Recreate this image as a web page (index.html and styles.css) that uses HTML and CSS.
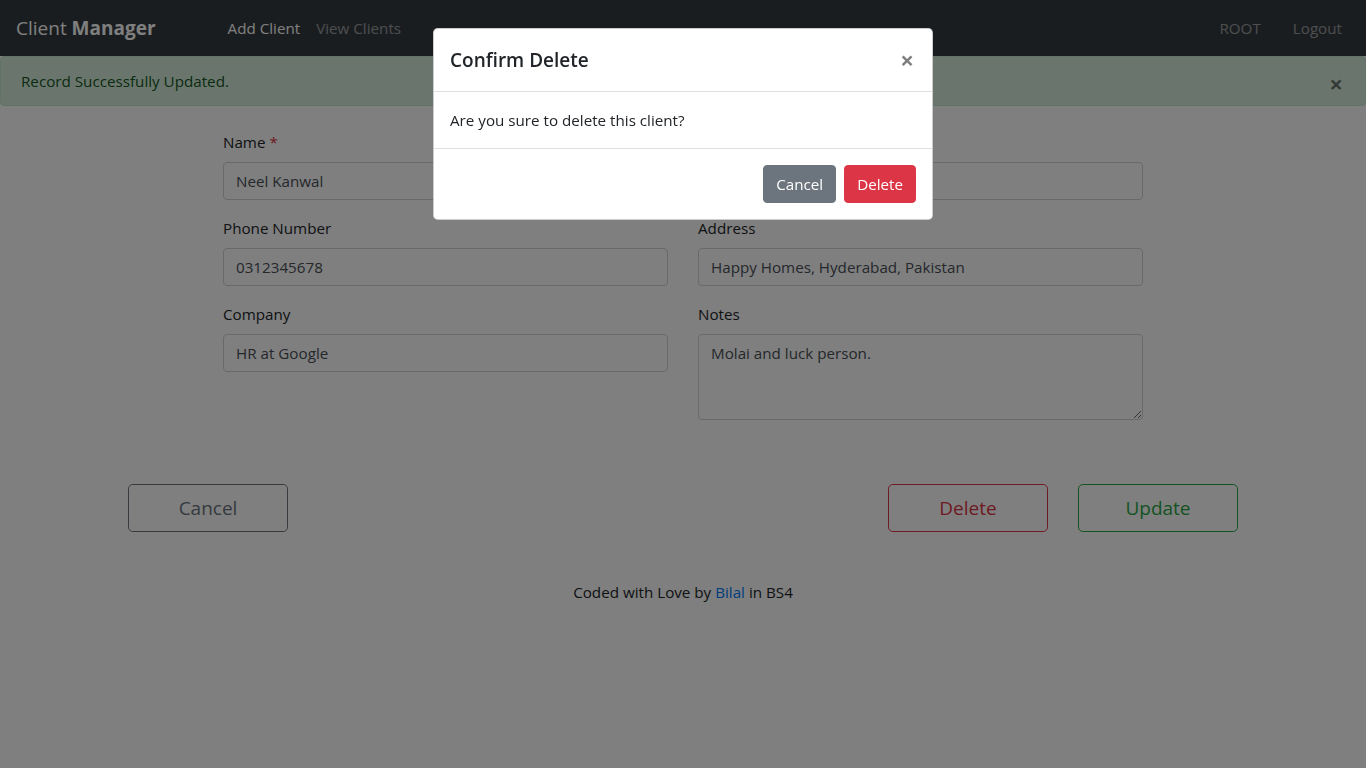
FILE: index.html
```html
<!DOCTYPE html>
<html lang="en">
<head>
<meta charset="utf-8">
<title>Client Manager</title>
<link rel="stylesheet" href="styles.css">
</head>
<body>
<nav class="navbar">
  <a class="brand" href="#">Client <b>Manager</b></a>
  <ul class="nav nav-left">
    <li class="active"><a href="#">Add Client</a></li>
    <li><a href="#">View Clients</a></li>
  </ul>
  <ul class="nav nav-right">
    <li><a href="#">ROOT</a></li>
    <li><a href="#">Logout</a></li>
  </ul>
</nav>

<div class="alert">
  Record Successfully Updated.
  <button class="close alert-close" type="button">&times;</button>
</div>

<main class="container">
  <form class="client-form">
    <div class="form-group">
      <label>Name <span class="req">*</span></label>
      <input class="form-control" type="text" value="Neel Kanwal">
    </div>
    <div class="form-group">
      <label>Email</label>
      <input class="form-control" type="text" value="neel@gmail.com">
    </div>
    <div class="form-group">
      <label>Phone Number</label>
      <input class="form-control" type="text" value="0312345678">
    </div>
    <div class="form-group">
      <label>Address</label>
      <input class="form-control" type="text" value="Happy Homes, Hyderabad, Pakistan">
    </div>
    <div class="form-group">
      <label>Company</label>
      <input class="form-control" type="text" value="HR at Google">
    </div>
    <div class="form-group">
      <label>Notes</label>
      <textarea class="form-control textarea" rows="3">Molai and luck person.</textarea>
    </div>
  </form>

  <div class="actions">
    <button class="btn-lg outline-secondary" type="button">Cancel</button>
    <div class="actions-right">
      <button class="btn-lg outline-danger" type="button">Delete</button>
      <button class="btn-lg outline-success" type="button">Update</button>
    </div>
  </div>

  <footer class="footer">Coded with Love by <a href="#">Bilal</a> in BS4</footer>
</main>

<div class="backdrop"></div>
<div class="modal-wrap">
  <div class="modal">
    <div class="modal-header">
      <h5 class="modal-title">Confirm Delete</h5>
      <button class="close modal-close" type="button">&times;</button>
    </div>
    <div class="modal-body">Are you sure to delete this client?</div>
    <div class="modal-footer">
      <button class="btn btn-secondary" type="button">Cancel</button>
      <button class="btn btn-danger" type="button">Delete</button>
    </div>
  </div>
</div>
</body>
</html>
```

FILE: styles.css
```css
* { box-sizing: border-box; }

html, body {
  margin: 0;
  padding: 0;
}

body {
  font-family: "Open Sans", "Noto Sans", sans-serif;
  font-size: 15.2px;
  line-height: 24px;
  color: #212529;
  background: #fff;
  height: 768px;
}

a { text-decoration: none; }

/* Navbar */
.navbar {
  display: flex;
  align-items: center;
  height: 56px;
  padding: 8px 16px;
  background: #343a40;
}

.brand {
  color: #fff;
  font-size: 19px;
  line-height: 30px;
  padding: 5px 0;
  margin-right: 16px;
}

.brand b { font-weight: 700; }

.nav {
  display: flex;
  list-style: none;
  margin: 0;
  padding: 0;
}

.nav a {
  display: block;
  padding: 8px;
  color: rgba(255, 255, 255, 0.5);
}

.nav .active a { color: #fff; }

.nav-left { margin-left: 48px; }

.nav-right {
  margin-left: auto;
  gap: 16px;
}

/* Alert */
.alert {
  position: relative;
  margin: 0 0 16px;
  padding: 12px 64px 12px 20px;
  background: #d4edda;
  border: 1px solid #c3e6cb;
  border-radius: 4px;
  color: #155724;
}

.close {
  background: transparent;
  border: 0;
  font-family: inherit;
  font-size: 24px;
  font-weight: 700;
  line-height: 1;
  color: #000;
  opacity: 0.5;
  text-shadow: 0 1px 0 #fff;
  cursor: pointer;
}

.alert-close {
  position: absolute;
  top: 0;
  right: 0;
  padding: 15px 22px 12px 20px;
}

/* Container */
.container {
  width: 1110px;
  margin: 0 auto;
  padding-top: 8px;
}

.client-form {
  margin: 0 95px;
  display: grid;
  grid-template-columns: 1fr 1fr;
  column-gap: 30px;
  align-items: start;
}

.form-group { margin-bottom: 16px; }

label {
  display: block;
  margin-bottom: 8px;
}

.req { color: #dc3545; }

.form-control {
  display: block;
  width: 100%;
  height: 38px;
  padding: 6px 12px;
  font-family: inherit;
  font-size: 15.2px;
  line-height: 24px;
  color: #495057;
  background: #fff;
  border: 1px solid #ced4da;
  border-radius: 4px;
  margin: 0;
}

.textarea {
  height: 86px;
  resize: vertical;
}

/* Actions */
.actions {
  display: flex;
  justify-content: space-between;
  margin-top: 48px;
}

.actions-right {
  display: flex;
  gap: 30px;
}

.btn-lg {
  width: 160px;
  height: 48px;
  padding: 8px 16px;
  font-family: inherit;
  font-size: 19px;
  line-height: 30px;
  background: transparent;
  border: 1px solid;
  border-radius: 4.8px;
  cursor: pointer;
}

.outline-secondary { color: #6c757d; border-color: #6c757d; }
.outline-danger { color: #dc3545; border-color: #dc3545; }
.outline-success { color: #28a745; border-color: #28a745; }

.footer {
  margin-top: 48px;
  text-align: center;
}

.footer a { color: #007bff; }

/* Modal */
.backdrop {
  position: fixed;
  inset: 0;
  background: rgba(0, 0, 0, 0.5);
}

.modal-wrap {
  position: fixed;
  inset: 0;
  display: flex;
  justify-content: center;
  align-items: flex-start;
  padding-top: 28px;
}

.modal {
  width: 500px;
  background: #fff;
  border: 1px solid rgba(0, 0, 0, 0.2);
  border-radius: 4.8px;
}

.modal-header {
  display: flex;
  align-items: flex-start;
  padding: 16px;
  border-bottom: 1px solid #dee2e6;
}

.modal-title {
  margin: 0;
  font-size: 19px;
  font-weight: 600;
  line-height: 30px;
}

.modal-close {
  margin: -16px -16px -16px auto;
  padding: 19px 18px 16px 16px;
}

.modal-body {
  padding: 16px;
}

.modal-footer {
  display: flex;
  justify-content: flex-end;
  padding: 12px;
  border-top: 1px solid #dee2e6;
}

.btn {
  margin: 4px;
  height: 38px;
  padding: 6px 12px;
  font-family: inherit;
  font-size: 15.2px;
  line-height: 24px;
  color: #fff;
  border: 1px solid;
  border-radius: 4px;
  cursor: pointer;
}

.btn-secondary { background: #6c757d; border-color: #6c757d; }
.btn-danger { background: #dc3545; border-color: #dc3545; }
```
